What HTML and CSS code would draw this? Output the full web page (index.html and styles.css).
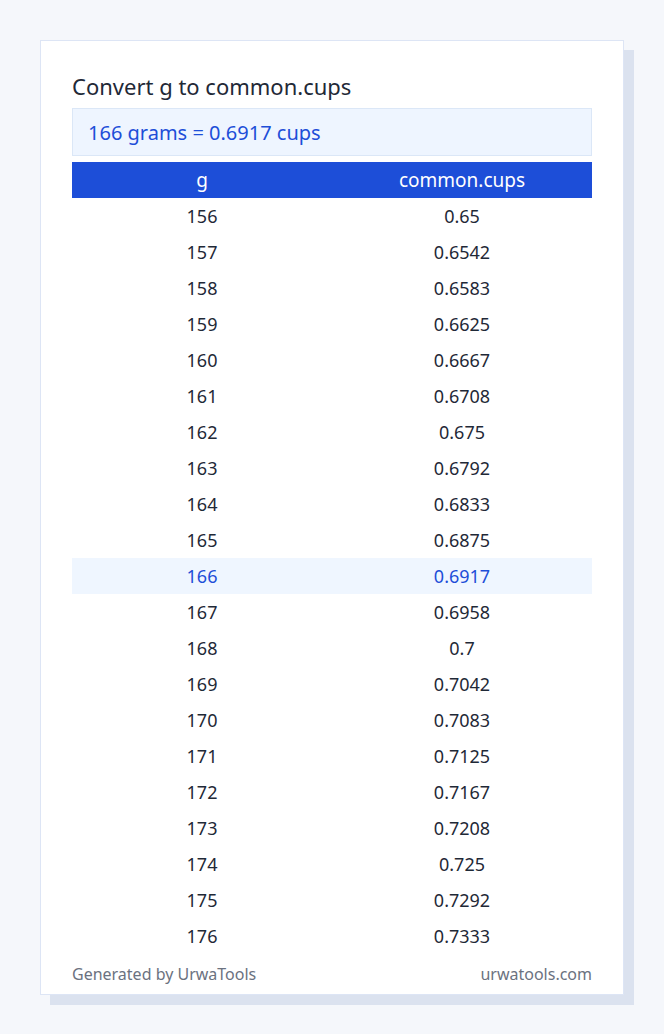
FILE: index.html
```html
<!DOCTYPE html>
<html lang="en">
<head>
<meta charset="utf-8">
<title>Convert g to common.cups</title>
<link rel="stylesheet" href="styles.css">
</head>
<body>
<div class="page">
  <div class="card">
    <h1 class="title">Convert g to common.cups</h1>
    <div class="result">166 grams = 0.6917 cups</div>
    <table class="table">
      <thead>
        <tr><th>g</th><th>common.cups</th></tr>
      </thead>
      <tbody>
        <tr><td>156</td><td>0.65</td></tr>
        <tr><td>157</td><td>0.6542</td></tr>
        <tr><td>158</td><td>0.6583</td></tr>
        <tr><td>159</td><td>0.6625</td></tr>
        <tr><td>160</td><td>0.6667</td></tr>
        <tr><td>161</td><td>0.6708</td></tr>
        <tr><td>162</td><td>0.675</td></tr>
        <tr><td>163</td><td>0.6792</td></tr>
        <tr><td>164</td><td>0.6833</td></tr>
        <tr><td>165</td><td>0.6875</td></tr>
        <tr class="active"><td>166</td><td>0.6917</td></tr>
        <tr><td>167</td><td>0.6958</td></tr>
        <tr><td>168</td><td>0.7</td></tr>
        <tr><td>169</td><td>0.7042</td></tr>
        <tr><td>170</td><td>0.7083</td></tr>
        <tr><td>171</td><td>0.7125</td></tr>
        <tr><td>172</td><td>0.7167</td></tr>
        <tr><td>173</td><td>0.7208</td></tr>
        <tr><td>174</td><td>0.725</td></tr>
        <tr><td>175</td><td>0.7292</td></tr>
        <tr><td>176</td><td>0.7333</td></tr>
      </tbody>
    </table>
    <div class="footer">
      <span>Generated by UrwaTools</span>
      <span>urwatools.com</span>
    </div>
  </div>
</div>
</body>
</html>
```

FILE: styles.css
```css
html, body {
  margin: 0;
  padding: 0;
  background: #f5f7fb;
  font-family: "Noto Sans", "Open Sans", sans-serif;
}

.page {
  padding: 40px;
  width: 584px;
}

.card {
  background: #ffffff;
  border: 1px solid #dde5f5;
  box-shadow: 10px 10px 0 #dbe2ef;
  padding: 31px 31px 9px;
}

.title {
  margin: 0;
  font-size: 22px;
  font-weight: 400;
  line-height: 28px;
  color: #1f2937;
}

.result {
  margin-top: 8px;
  height: 46px;
  display: flex;
  align-items: center;
  padding: 0 15px;
  background: #eef5ff;
  border: 1px solid #dbe7f7;
  color: #1d4ed8;
  font-size: 20px;
}

.table {
  margin-top: 6px;
  width: 100%;
  border-collapse: collapse;
  table-layout: fixed;
  font-size: 18px;
}

.table th {
  height: 36px;
  padding: 0;
  background: #1d4ed8;
  color: #ffffff;
  font-weight: 400;
  font-size: 19px;
  text-align: center;
}

.table td {
  height: 36px;
  padding: 0;
  text-align: center;
  color: #1f2937;
}

.table tr.active td {
  background: #eff6ff;
  color: #1d4ed8;
}

.footer {
  display: flex;
  justify-content: space-between;
  padding: 9px 0 0;
  font-size: 16px;
  line-height: 22px;
  color: #6b7280;
}
```
